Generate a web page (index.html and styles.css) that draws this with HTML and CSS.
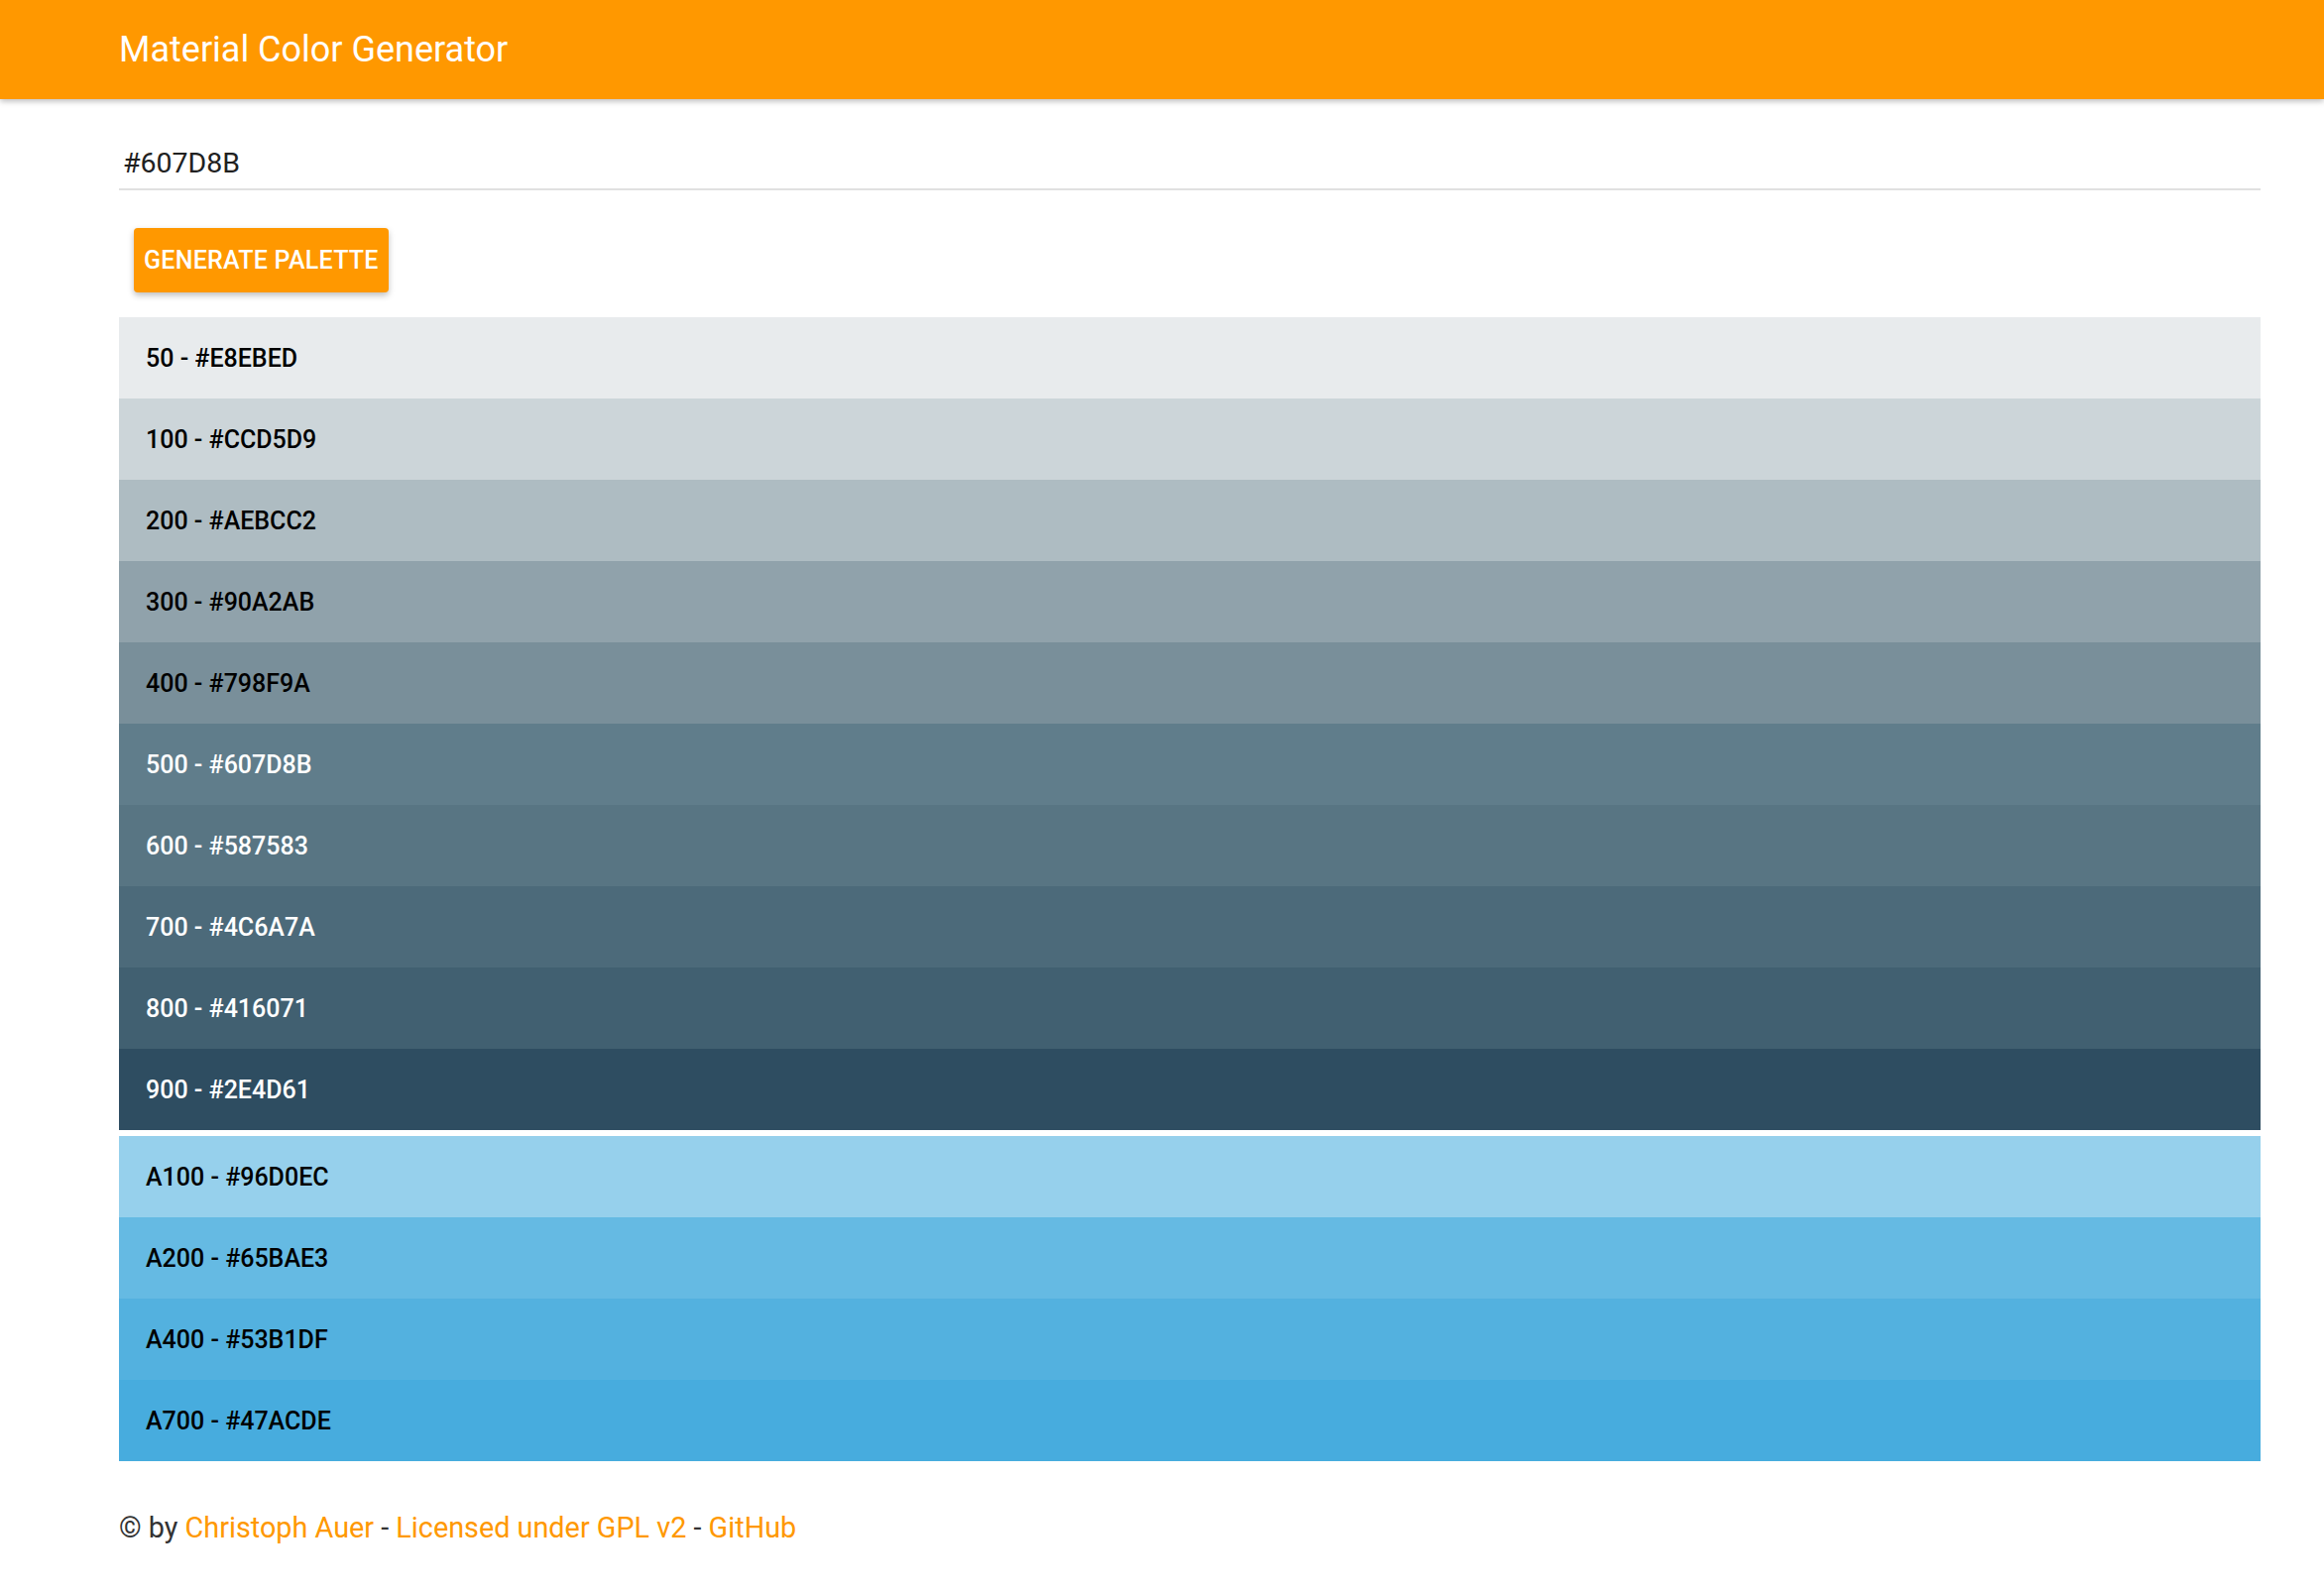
FILE: index.html
```html
<!DOCTYPE html>
<html lang="en">
<head>
<meta charset="utf-8">
<title>Material Color Generator</title>
<link rel="stylesheet" href="styles.css">
</head>
<body>
<header class="toolbar">
  <h1 class="toolbar-title">Material Color Generator</h1>
</header>
<main class="content">
  <div class="field">
    <input class="field-input" type="text" value="#607D8B">
  </div>
  <button class="btn" type="button">GENERATE PALETTE</button>
  <section class="palette">
    <div class="swatch dark-text" style="background:#E8EBED">50 - #E8EBED</div>
    <div class="swatch dark-text" style="background:#CCD5D9">100 - #CCD5D9</div>
    <div class="swatch dark-text" style="background:#AEBCC2">200 - #AEBCC2</div>
    <div class="swatch dark-text" style="background:#90A2AB">300 - #90A2AB</div>
    <div class="swatch dark-text" style="background:#798F9A">400 - #798F9A</div>
    <div class="swatch light-text" style="background:#607D8B">500 - #607D8B</div>
    <div class="swatch light-text" style="background:#587583">600 - #587583</div>
    <div class="swatch light-text" style="background:#4C6A7A">700 - #4C6A7A</div>
    <div class="swatch light-text" style="background:#416071">800 - #416071</div>
    <div class="swatch light-text" style="background:#2E4D61">900 - #2E4D61</div>
  </section>
  <section class="palette accents">
    <div class="swatch dark-text" style="background:#96D0EC">A100 - #96D0EC</div>
    <div class="swatch dark-text" style="background:#65BAE3">A200 - #65BAE3</div>
    <div class="swatch dark-text" style="background:#53B1DF">A400 - #53B1DF</div>
    <div class="swatch dark-text" style="background:#47ACDE">A700 - #47ACDE</div>
  </section>
  <footer class="footer">
    © by <a href="#">Christoph Auer</a> - <a href="#">Licensed under GPL v2</a> - <a href="#">GitHub</a>
  </footer>
</main>
</body>
</html>
```
FILE: styles.css
```css
html, body {
  margin: 0;
  padding: 0;
  background: #fff;
  font-family: Roboto, "Liberation Sans", Arial, sans-serif;
}

.toolbar {
  height: 100px;
  background: #FF9800;
  box-shadow: 0 2px 6px rgba(0, 0, 0, 0.28);
  display: flex;
  align-items: center;
  padding-left: 120px;
  position: relative;
  z-index: 1;
}

.toolbar-title {
  margin: 0;
  font-size: 36px;
  font-weight: 400;
  color: #fff;
  line-height: 1;
}

.content {
  padding: 0 64px 60px 120px;
}

.field {
  margin-top: 34px;
  border-bottom: 2px solid #e0e0e0;
}

.field-input {
  display: block;
  width: 100%;
  box-sizing: border-box;
  height: 56px;
  border: 0;
  outline: none;
  padding: 5px 4px 0;
  background: transparent;
  font-family: Roboto, "Liberation Sans", Arial, sans-serif;
  font-size: 28.5px;
  color: #212121;
}

.btn {
  display: block;
  margin: 38px 0 0 15px;
  height: 65px;
  padding: 0 10px;
  border: 0;
  border-radius: 4px;
  background: #FF9800;
  color: #fff;
  font-family: Roboto, "Liberation Sans", Arial, sans-serif;
  font-size: 25px;
  font-weight: 500;
  letter-spacing: 0.25px;
  box-shadow: 0 3px 6px rgba(0, 0, 0, 0.26);
}

.palette {
  margin-top: 25px;
  display: flex;
  flex-direction: column;
}

.palette.accents {
  margin-top: 6px;
}

.swatch {
  height: 82px;
  display: flex;
  align-items: center;
  padding-left: 27px;
  font-size: 25px;
  font-weight: 500;
}

.dark-text {
  color: #000;
}

.light-text {
  color: #fff;
}

.footer {
  margin-top: 46px;
  font-size: 28.8px;
  line-height: 42px;
  color: #333;
}

.footer a {
  color: #FF9800;
  text-decoration: none;
}
```
